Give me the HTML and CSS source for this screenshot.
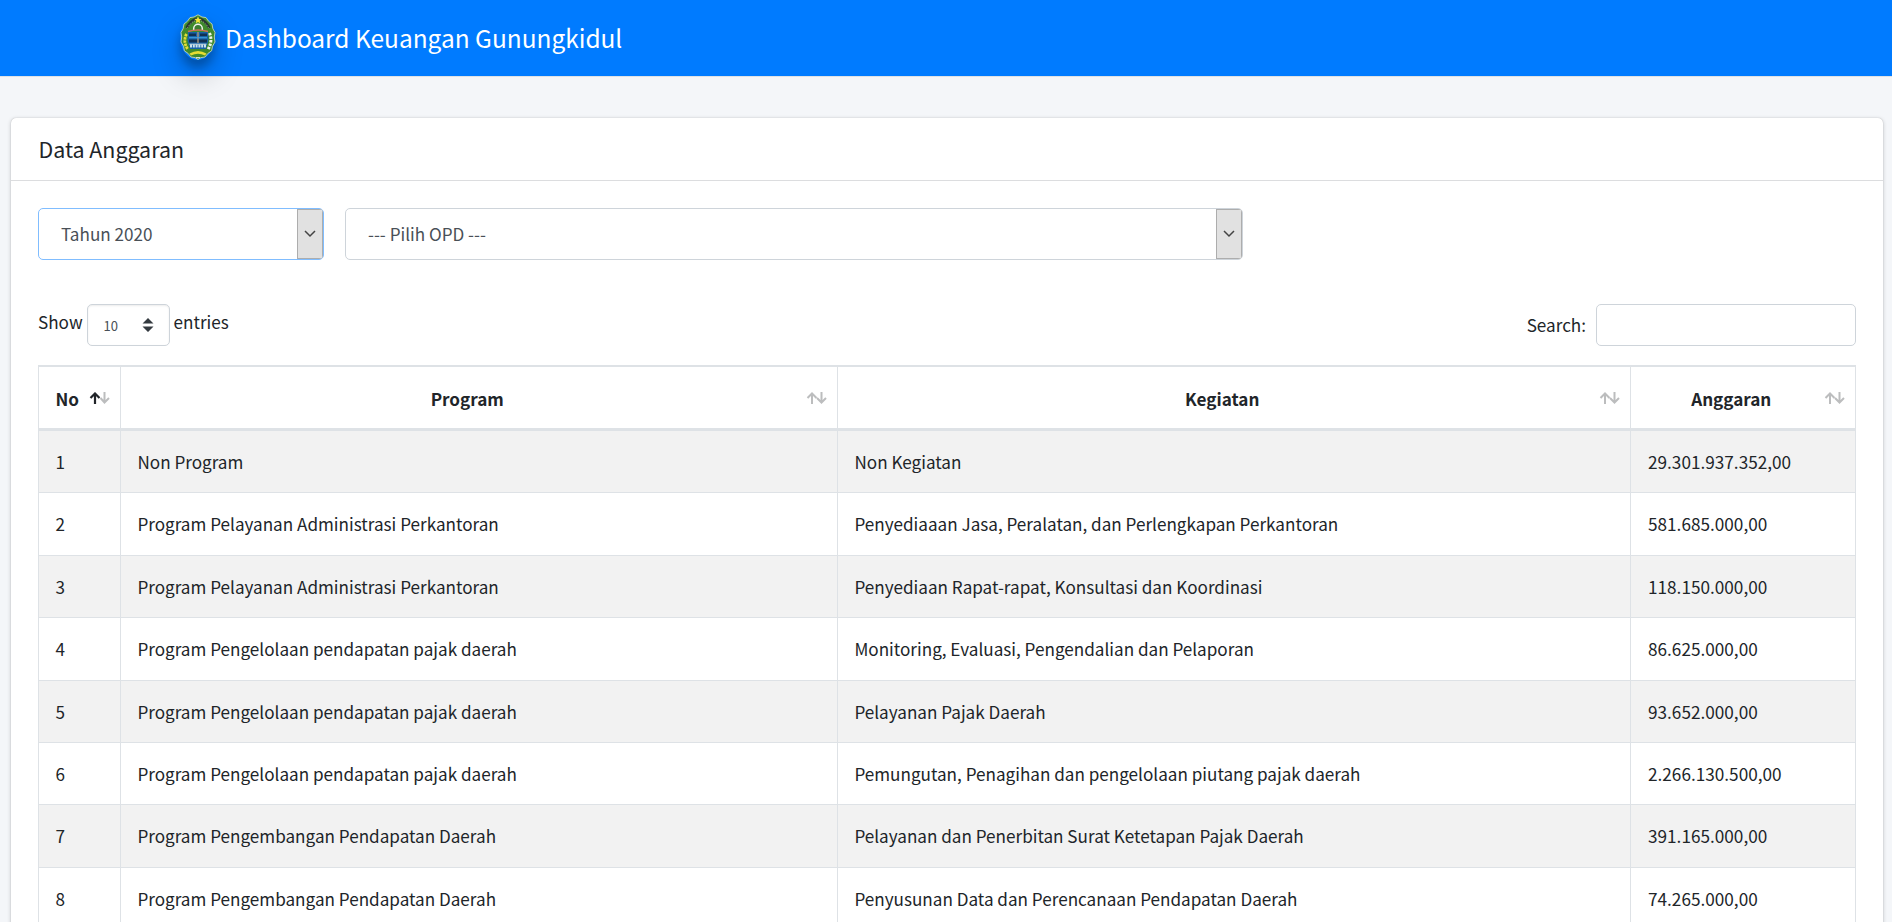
FILE: index.html
```html
<!DOCTYPE html>
<html lang="id">
<head>
<meta charset="utf-8">
<title>Dashboard Keuangan Gunungkidul</title>
<link rel="stylesheet" href="styles.css">
</head>
<body>
<header class="navbar">
  <span class="brand-logo">
    <svg width="36" height="46" viewBox="0 0 36 46">
      <path d="M18 .8 22 3l4 .6 2.500 3.600L32 10l.8 4.500L35 18.500 34.300 23 35 28l-2.500 4.200-.9 4.600-3.800 2.700L25 43l-4 .6L18 45.400 15 43.600 11 43l-2.800-3.500-3.800-2.700-.9-4.600L1 28l.7-5L1 18.500l2.200-4L4 10l3.500-2.800L10 3.600 14 3z" fill="#3f8a2c" stroke="#c3d3b2" stroke-width=".9"/>
      <path d="M6.500 14Q11 6 17 4.500M29.500 14Q25 6 19 4.500" fill="none" stroke="#27382f" stroke-width="2.600"/>
      <path d="M7 14.500Q11 8 15 7M29 14.500Q25 8 21 7" fill="none" stroke="#a7b79b" stroke-width=".8" stroke-dasharray="1.500 1"/>
      <path d="m18 2.500 1 2.300 2.600.2-2 1.700.7 2.600-2.300-1.400-2.300 1.400.7-2.600-2-1.700 2.600-.2z" fill="#f5e436"/>
      <path d="M13.700 16v-1.500a4.300 4.300 0 0 1 8.600 0V16" fill="#3b7c30" stroke="#eef2e8" stroke-width="1.500"/>
      <path d="M8 18h20l.5 8-2.500 9H10l-2.500-9z" fill="#1662a8"/>
      <path d="M9 19.500h7v2.500H9zM20 19.500h7v2.500h-7zM9 25.500h18v3H9z" fill="#123052"/>
      <path d="M8 17.500q10-3 20 0" fill="none" stroke="#d0705a" stroke-width="1.500"/>
      <path d="M18 18v11" stroke="#a0907c" stroke-width="1.500"/>
      <path d="M9 23.700h18" stroke="#3f9bd7" stroke-width="1.200"/>
      <path d="M10 32h16" stroke="#cfe2ec" stroke-width="3" stroke-dasharray="2 .8"/>
      <path d="M9.500 30.200h17" stroke="#e5eee9" stroke-width=".9"/>
      <path d="M6.500 20Q2.500 28 8 35.500" fill="none" stroke="#e3dc35" stroke-width="2.800" stroke-dasharray="2.500 .8"/>
      <path d="M29.500 19Q33 27 28 35.500" fill="none" stroke="#eef4ea" stroke-width="3" stroke-dasharray="2.400 1.200"/>
      <path d="M9.500 39.500Q18 34.500 26.500 39.500L25 41.500Q18 38 11 41.500z" fill="#e6dc33"/>
      <path d="M16 43.600h4" stroke="#e3eee2"/>
    </svg>
  </span>
  <span class="brand-text">Dashboard Keuangan Gunungkidul</span>
</header>

<main class="card">
  <div class="card-header"><h3 class="card-title">Data Anggaran</h3></div>
  <div class="card-body">
    <div class="filters">
      <div class="select select-year"><span class="select-value">Tahun 2020</span><span class="select-button"><svg width="12" height="8" viewBox="0 0 12 8"><path d="m1 1 5 5 5-5" fill="none" stroke="#444" stroke-width="1.500"/></svg></span></div>
      <div class="select select-opd"><span class="select-value">--- Pilih OPD ---</span><span class="select-button"><svg width="12" height="8" viewBox="0 0 12 8"><path d="m1 1 5 5 5-5" fill="none" stroke="#444" stroke-width="1.500"/></svg></span></div>
    </div>
    <div class="controls">
      <div class="length"><span class="length-label">Show</span><div class="length-select"><span>10</span><svg width="12" height="14" viewBox="0 0 12 14"><path d="M.5 5.500 6 0l5.500 5.500zM.5 8.500 6 14l5.500-5.500z" fill="#343a40"/></svg></div><span class="length-label">entries</span></div>
      <label class="search"><span>Search:</span><input class="search-input" type="text"></label>
    </div>
    <table class="table">
      <colgroup><col class="col-no"><col class="col-program"><col class="col-kegiatan"><col></colgroup>
      <thead><tr>
        <th><div class="head"><span>No</span><svg class="sort" width="22" height="12" viewBox="0 0 22 12"><path d="M6 12V2M1.500 6 6 1.500 10.500 6" fill="none" stroke="#212529" stroke-width="2.200"/><path d="M15.500 0v10M11.500 6l4 4.500 4.500-4.500" fill="none" stroke="#bcbdbe" stroke-width="2"/></svg></div></th>
        <th><div class="head"><span>Program</span><svg class="sort" width="22" height="12" viewBox="0 0 22 12"><path d="M6 12V2M1.500 6 6 1.500 10.500 6M15.500 0v10M11 6l4.500 4.500L20 6" fill="none" stroke="#bcbdbe" stroke-width="2"/></svg></div></th>
        <th><div class="head"><span>Kegiatan</span><svg class="sort" width="22" height="12" viewBox="0 0 22 12"><path d="M6 12V2M1.500 6 6 1.500 10.500 6M15.500 0v10M11 6l4.500 4.500L20 6" fill="none" stroke="#bcbdbe" stroke-width="2"/></svg></div></th>
        <th><div class="head"><span>Anggaran</span><svg class="sort" width="22" height="12" viewBox="0 0 22 12"><path d="M6 12V2M1.500 6 6 1.500 10.500 6M15.500 0v10M11 6l4.500 4.500L20 6" fill="none" stroke="#bcbdbe" stroke-width="2"/></svg></div></th>
      </tr></thead>
      <tbody>
        <tr><td>1</td><td>Non Program</td><td>Non Kegiatan</td><td>29.301.937.352,00</td></tr>
        <tr><td>2</td><td>Program Pelayanan Administrasi Perkantoran</td><td>Penyediaaan Jasa, Peralatan, dan Perlengkapan Perkantoran</td><td>581.685.000,00</td></tr>
        <tr><td>3</td><td>Program Pelayanan Administrasi Perkantoran</td><td>Penyediaan Rapat-rapat, Konsultasi dan Koordinasi</td><td>118.150.000,00</td></tr>
        <tr><td>4</td><td>Program Pengelolaan pendapatan pajak daerah</td><td>Monitoring, Evaluasi, Pengendalian dan Pelaporan</td><td>86.625.000,00</td></tr>
        <tr><td>5</td><td>Program Pengelolaan pendapatan pajak daerah</td><td>Pelayanan Pajak Daerah</td><td>93.652.000,00</td></tr>
        <tr><td>6</td><td>Program Pengelolaan pendapatan pajak daerah</td><td>Pemungutan, Penagihan dan pengelolaan piutang pajak daerah</td><td>2.266.130.500,00</td></tr>
        <tr><td>7</td><td>Program Pengembangan Pendapatan Daerah</td><td>Pelayanan dan Penerbitan Surat Ketetapan Pajak Daerah</td><td>391.165.000,00</td></tr>
        <tr><td>8</td><td>Program Pengembangan Pendapatan Daerah</td><td>Penyusunan Data dan Perencanaan Pendapatan Daerah</td><td>74.265.000,00</td></tr>
      </tbody>
    </table>
  </div>
</main>
</body>
</html>
```
FILE: styles.css
```css
* { box-sizing: border-box; }
body {
  margin: 0;
  height: 922px;
  overflow: hidden;
  background: #f4f6f9;
  color: #212529;
  font: 17.12px/29px "Noto Sans CJK SC", "Open Sans", sans-serif;
}
svg { display: block; flex: none; }

.navbar {
  display: flex;
  height: 77px;
  padding-left: 180px;
  background: #007bff;
  border-bottom: 1px solid #dee2e6;
}
.brand-logo {
  width: 35px;
  height: 46px;
  margin-top: 14px;
  border-radius: 50%;
  box-shadow: 0 15px 30px rgba(0, 0, 0, .22), 0 8px 9px rgba(0, 0, 0, .22);
}
.brand-text {
  margin: 20px 0 0 10px;
  color: #fff;
  font-size: 24.45px;
  line-height: 36px;
}

.card {
  margin: 41px 9px 0 11px;
  height: 1000px;
  background: #fff;
  border-radius: 5px;
  box-shadow: 0 0 1px rgba(0, 0, 0, .25), 0 1px 4px rgba(0, 0, 0, .2);
}
.card-header {
  height: 63px;
  padding: 16px 27.5px 0;
  border-bottom: 1px solid #dcdddf;
}
.card-title { margin: 0; font-size: 21.4px; font-weight: 400; line-height: 30px; }
.card-body { padding: 27px 27px 0 27px; }

.filters { display: flex; gap: 21px; }
.select {
  display: flex;
  justify-content: space-between;
  height: 52px;
  border: 1px solid #ced4da;
  border-radius: 5px;
  overflow: hidden;
  color: #495057;
}
.select-year { width: 286px; border-color: #80bdff; }
.select-opd { width: 898px; }
.select-value { padding: 10px 0 0 22px; }
.select-button {
  display: flex;
  align-items: center;
  justify-content: center;
  width: 26px;
  padding-right: 1px;
  background: #e1e1e1;
  border: 1px solid #adadad;
}

.controls { display: flex; justify-content: space-between; height: 105px; padding-top: 44px; }
.length { display: flex; gap: 4px; }
.length-label { padding-top: 3px; }
.length-select {
  display: flex;
  justify-content: space-between;
  width: 83px;
  height: 42px;
  padding: 6px 15px 0 16px;
  border: 1px solid #ced4da;
  border-radius: 5px;
  box-shadow: inset 0 1px 2px rgba(0, 0, 0, .08);
  font-size: 13px;
  color: #495057;
}
.length-select svg { margin-top: 7px; }
.search { display: flex; gap: 10px; }
.search span { padding-top: 6px; }
.search-input { width: 260px; height: 42px; border: 1px solid #ced4da; border-radius: 5px; }

.table {
  width: 1818px;
  table-layout: fixed;
  border-collapse: separate;
  border-spacing: 0;
  border-left: 1px solid #dee2e6;
  border-top: 1px solid #dee2e6;
}
.col-no { width: 82px; }
.col-program { width: 717px; }
.col-kegiatan { width: 793px; }
th, td { padding: 0 0 0 16.4px; border-right: 1px solid #dee2e6; border-bottom: 1px solid #dee2e6; text-align: left; }
th { height: 65px; border-top: 1px solid #dee2e6; border-bottom-width: 3px; padding: 1px 9px 0 16.5px; }
td { height: 62.4px; padding-bottom: .5px; }
td:last-child { font-size: 17.2px; padding-left: 17px; }
.head { display: flex; align-items: center; }
.head span { flex: 1; margin-right: 9px; text-align: center; }
th:first-child span { margin-right: 0; text-align: left; }
tbody tr:nth-child(odd) { background: #f2f2f2; }
```
